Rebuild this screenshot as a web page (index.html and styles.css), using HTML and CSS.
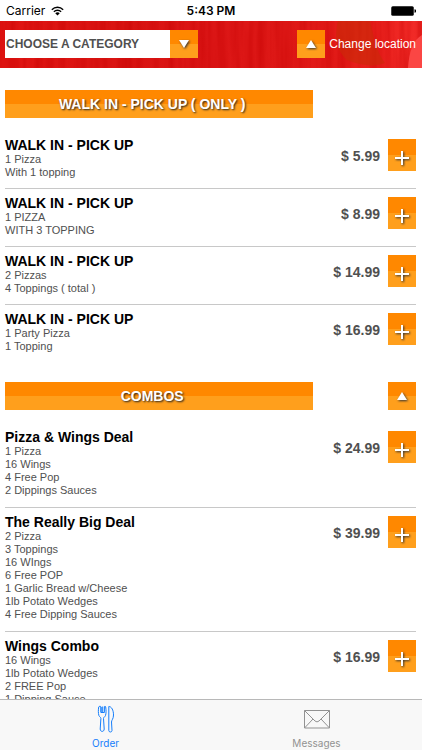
FILE: index.html
```html
<!DOCTYPE html>
<html lang="en">
<head>
<meta charset="utf-8">
<meta name="viewport" content="width=device-width, initial-scale=1">
<title>Order</title>
<link rel="stylesheet" href="styles.css">
</head>
<body>
<div class="status">
  <div class="carrier"><span>Carrier</span>
    <svg class="wifi" viewBox="0 0 24 18" aria-hidden="true"><path d="M1.500 6.500a15 15 0 0 1 21 0M5.300 10.300a9.600 9.600 0 0 1 13.400 0" fill="none" stroke="#000" stroke-width="2.600"/><path d="M12 17.500l-4.200-4.200a6 6 0 0 1 8.400 0z"/></svg>
  </div>
  <time class="clock">5:43 PM</time>
  <svg class="battery" viewBox="0 0 50 20" aria-hidden="true"><rect x="0.500" y="0.500" width="45" height="19" rx="3"/><path d="M47 6.500a3.500 3.500 0 0 1 0 7z"/></svg>
</div>
<header class="header">
  <svg class="wood" viewBox="0 0 422 47" preserveAspectRatio="none" aria-hidden="true">
    <defs>
      <linearGradient id="red"><stop offset="0" stop-color="#e01512"/><stop offset=".3" stop-color="#d91412"/><stop offset=".5" stop-color="#dc1616"/><stop offset=".68" stop-color="#de1816"/><stop offset=".88" stop-color="#e81f1b"/><stop offset="1" stop-color="#f42d2a"/></linearGradient>
      <filter id="grain" x="0" y="0" width="1" height="1"><feTurbulence type="fractalNoise" baseFrequency=".12 .008" numOctaves="3" seed="4"/><feColorMatrix values="0 0 0 0 .55  0 0 0 0 0  0 0 0 0 0  0 .9 0 0 -.32"/></filter>
    </defs>
    <rect width="422" height="47" fill="url(#red)"/>
    <rect width="422" height="47" filter="url(#grain)"/>
    <path d="M338 0h32c4 16 6 30 15 42-10 4-24 3-38-3-8-8-14-18-9-39z" fill="#c92c08" opacity=".6"/>
    <path d="M422 14c-9 5-13 17-14 33h14z" fill="#fb4644"/>
  </svg>
  <div class="picker">
    <select class="category" aria-label="Category"><option>CHOOSE A CATEGORY</option><option>WALK IN - PICK UP ( ONLY )</option><option>COMBOS</option></select>
    <button class="square" aria-label="Open categories"><svg class="tri" viewBox="0 0 10 8"><path d="M0 0h10L5 8z"/></svg></button>
  </div>
  <div class="location">
    <button class="square" aria-label="Back to top"><svg class="tri" viewBox="0 0 10 8"><path d="M0 8h10L5 0z"/></svg></button>
    <a class="change" href="#location">Change location</a>
  </div>
</header>
<main class="menu">
  <section>
    <div class="heading"><h2 class="banner">WALK IN - PICK UP ( ONLY )</h2></div>
    <article class="item"><div class="info"><h3>WALK IN - PICK UP</h3><p>1 Pizza<br>With 1 topping</p></div><span class="price">$ 5.99</span><button class="square add" aria-label="Add"><svg class="plus" viewBox="0 0 14 14"><path d="M7 0v14M0 7h14"/></svg></button></article>
    <article class="item"><div class="info"><h3>WALK IN - PICK UP</h3><p>1 PIZZA<br>WITH 3 TOPPING</p></div><span class="price">$ 8.99</span><button class="square add" aria-label="Add"><svg class="plus" viewBox="0 0 14 14"><path d="M7 0v14M0 7h14"/></svg></button></article>
    <article class="item"><div class="info"><h3>WALK IN - PICK UP</h3><p>2 Pizzas<br>4 Toppings ( total )</p></div><span class="price">$ 14.99</span><button class="square add" aria-label="Add"><svg class="plus" viewBox="0 0 14 14"><path d="M7 0v14M0 7h14"/></svg></button></article>
    <article class="item"><div class="info"><h3>WALK IN - PICK UP</h3><p>1 Party Pizza<br>1 Topping</p></div><span class="price">$ 16.99</span><button class="square add" aria-label="Add"><svg class="plus" viewBox="0 0 14 14"><path d="M7 0v14M0 7h14"/></svg></button></article>
  </section>
  <section class="combos">
    <div class="heading"><h2 class="banner">COMBOS</h2><button class="square" aria-label="Back to top"><svg class="tri" viewBox="0 0 10 8"><path d="M0 8h10L5 0z"/></svg></button></div>
    <article class="item"><div class="info"><h3>Pizza &amp; Wings Deal</h3><p>1 Pizza<br>16 Wings<br>4 Free Pop<br>2 Dippings Sauces</p></div><span class="price">$ 24.99</span><button class="square add" aria-label="Add"><svg class="plus" viewBox="0 0 14 14"><path d="M7 0v14M0 7h14"/></svg></button></article>
    <article class="item"><div class="info"><h3>The Really Big Deal</h3><p>2 Pizza<br>3 Toppings<br>16 WIngs<br>6 Free POP<br>1 Garlic Bread w/Cheese<br>1lb Potato Wedges<br>4 Free Dipping Sauces</p></div><span class="price">$ 39.99</span><button class="square add" aria-label="Add"><svg class="plus" viewBox="0 0 14 14"><path d="M7 0v14M0 7h14"/></svg></button></article>
    <article class="item"><div class="info"><h3>Wings Combo</h3><p>16 Wings<br>1lb Potato Wedges<br>2 FREE Pop<br>1 Dipping Sauce</p></div><span class="price">$ 16.99</span><button class="square add" aria-label="Add"><svg class="plus" viewBox="0 0 14 14"><path d="M7 0v14M0 7h14"/></svg></button></article>
  </section>
</main>
<nav class="tabs">
  <a class="tab active" href="#order">
    <svg class="icon" viewBox="0 0 28 28" aria-hidden="true"><path d="M6.700 2c-.4 3-.6 6 .2 8.500.5 1.400 2 1.700 2 3L8.200 24c0 3.200 4 3.200 4 0l-.7-10.500c0-1.300 1.500-1.600 2-3 .8-2.500.6-5.500.2-8.500-.2-1-1.300-1-1.300 0v5.500M9 7.500V2c0-1-2-1-2.300 0M9 2v5.500M10.700 1.500v6M9 7.500h3.400"/><path d="M16.800 1.500v24c0 2 3.200 2 3.200 0l-.5-8.500c0-2 2-3 2-7 0-5-2-8.500-4.700-8.500z"/></svg>
    <span>Order</span></a>
  <a class="tab" href="#messages">
    <svg class="icon" viewBox="0 0 28 28" aria-hidden="true"><path d="M1.500 5.500h25v17.500h-25zM1.500 5.500l10.500 10.500q2 1.800 4 0L26.500 5.500M1.500 23l8.500-9M26.500 23L18 14"/></svg>
    <span>Messages</span></a>
</nav>
</body>
</html>
```

FILE: styles.css
```css
* { box-sizing: border-box; }
body { margin: 0; height: 100vh; display: flex; flex-direction: column; overflow: hidden; background: #fff; color: #505050; font-family: "Liberation Sans", Arial, sans-serif; }
h2, h3, p { margin: 0; }
button, select { margin: 0; padding: 0; border: 0; border-radius: 0; font: inherit; }
a { color: inherit; text-decoration: none; }

.status { flex: none; height: 21px; padding: 0 6px; display: grid; grid-template-columns: 1fr auto 1fr; align-items: center; color: #000; font-family: Inter, sans-serif; font-size: 12px; }
.carrier { display: flex; align-items: center; gap: 6px; }
.wifi { width: 13px; height: 10px; }
.clock { font-weight: 600; }
.battery { justify-self: end; width: 25px; height: 10px; }

.header { position: relative; flex: none; height: 47px; padding: 0 6px 1px 5px; display: flex; align-items: center; justify-content: space-between; }
.wood { position: absolute; inset: 0; width: 100%; height: 100%; }
.picker, .location { position: relative; display: flex; align-items: center; }
.picker { width: 47%; }
.location { gap: 4px; }
.category { flex: 1; min-width: 0; height: 28px; padding-left: 1px; appearance: none; background: #fff; color: #505050; font-size: 12px; font-weight: bold; }
.change { color: #fff; font-size: 12px; }

.square { flex: none; width: 28px; height: 28px; display: flex; align-items: center; justify-content: center; background: linear-gradient(#ff8800 50%, #ff9f1c 50%); }
.add { height: 32px; margin-top: 2px; padding-top: 6px; }
.tri { width: 10px; height: 8px; fill: #fff; filter: drop-shadow(1px 1px 1px #333); overflow: visible; }
.plus { width: 14px; height: 14px; fill: none; stroke: #fff; stroke-width: 2; filter: drop-shadow(1px 1px 1px #333); overflow: visible; }

.menu { flex: 1; min-height: 0; overflow: hidden; padding: 2px 6px 0 5px; }
.heading { display: flex; justify-content: space-between; padding: 20px 0 13px; }
.banner { width: 75%; padding-right: 14px; background: linear-gradient(#ff8800 50%, #ff9f1c 50%); color: #fff; font-size: 14px; line-height: 28px; text-align: center; text-shadow: 1px 1px 2px #222; }
.item { display: flex; align-items: flex-start; padding: 6px 0 9px; border-bottom: 1px solid #c8c8c8; }
.combos .item { padding-bottom: 10px; }
.item:last-child { border-bottom: 0; }
.info { flex: 1; }
.info h3 { color: #000; font-size: 14px; line-height: 16px; }
.info p { font-size: 11px; line-height: 13px; }
.price { margin-right: 8px; font-size: 14px; line-height: 38px; font-weight: bold; }

.tabs { position: relative; flex: none; height: 51px; display: flex; background: #f8f8f8; border-top: 1px solid #b8b8b8; color: #929292; font-family: Inter, sans-serif; font-size: 10px; }
.tab { flex: 1; display: flex; flex-direction: column; align-items: center; padding-top: 5px; gap: 4px; line-height: 12px; }
.active { color: #157efb; }
.icon { width: 28px; height: 28px; fill: none; stroke: currentColor; stroke-width: 1; }
```
